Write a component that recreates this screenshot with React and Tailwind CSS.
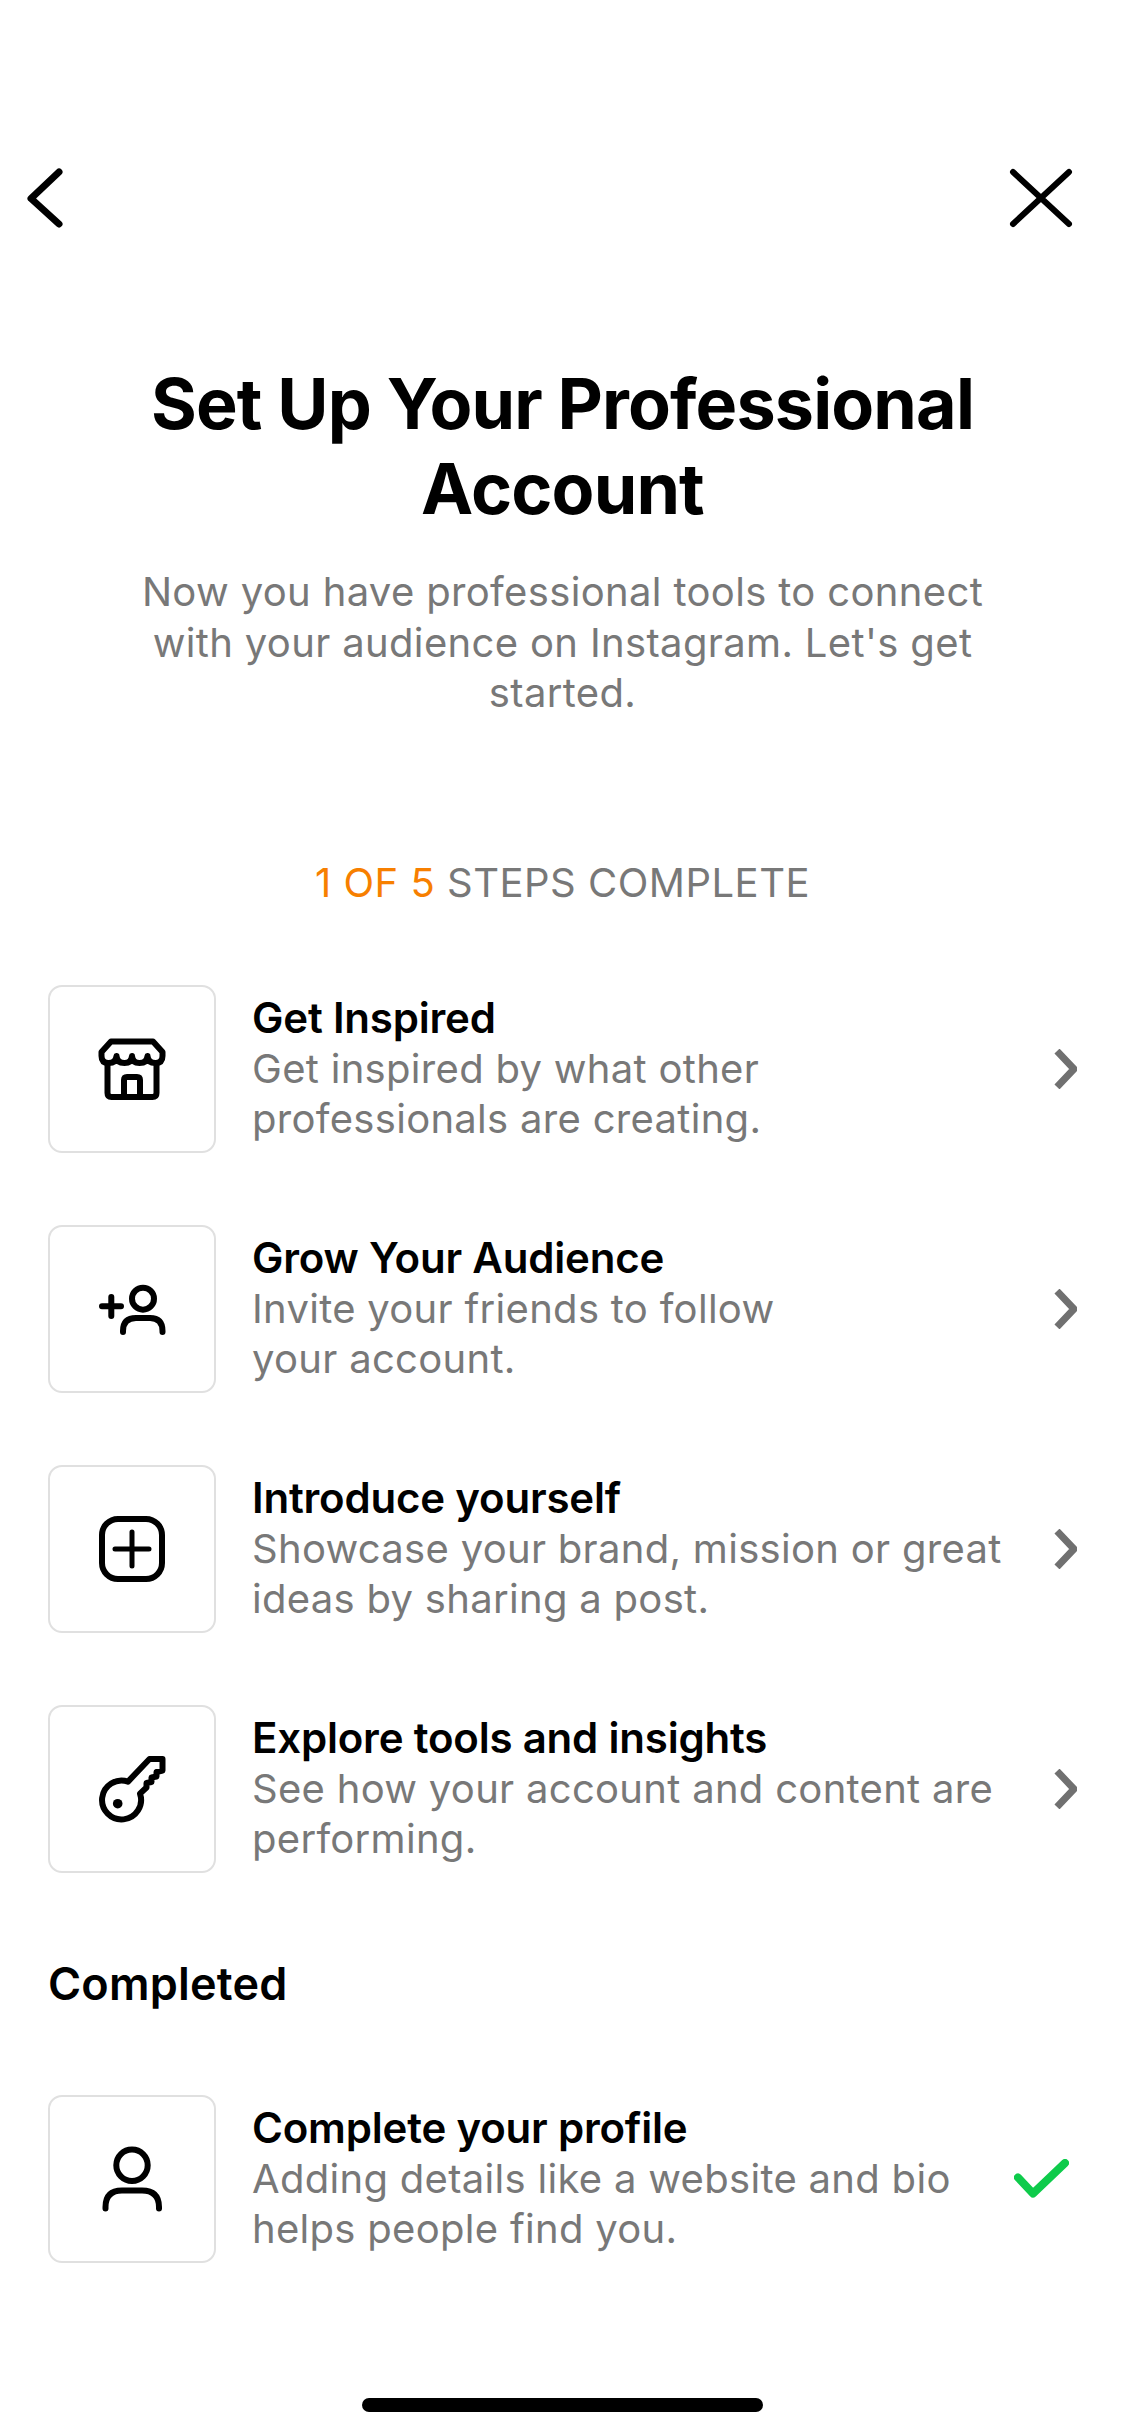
import React from 'react';

const sw = { fill: 'none', stroke: 'currentColor', strokeWidth: 6, strokeLinecap: 'round', strokeLinejoin: 'round' };

const StoreIcon = () => (
  <svg width="72" height="72" viewBox="0 0 72 72" {...sw}>
    <path d="M15 8.5H57L66.5 19V23Q66.5 30 59.5 30Q52 30 51.5 23Q51 30 43.5 30Q36.5 30 36 23Q35.5 30 28.5 30Q21 30 20.5 23Q20 30 12.5 30Q5.5 30 5.5 23V19Z" />
    <path d="M11.5 30V60Q11.5 64 15.5 64H56.5Q60.5 64 60.5 60V30" />
    <path d="M28 64V47Q28 44 31 44H41Q44 44 44 47V64" />
  </svg>
);

const AddPersonIcon = () => (
  <svg width="72" height="72" viewBox="0 0 72 72" {...sw}>
    <circle cx="47" cy="25.7" r="11" />
    <path d="M27 59V58Q27 45 40 45H54Q66.5 45 66.5 58V59" />
    <path d="M6 33.3H25M15.3 24V43" />
  </svg>
);

const PlusBoxIcon = () => (
  <svg width="72" height="72" viewBox="0 0 72 72" {...sw}>
    <rect x="6" y="6" width="60" height="60" rx="16" />
    <path d="M19 36H53M36 19V53" strokeWidth="5" />
  </svg>
);

const KeyIcon = () => (
  <svg width="72" height="72" viewBox="0 0 72 72" {...sw}>
    <path d="M32 28.6L53.5 6H66.5V17.5L60.5 19V23.5L55.5 24.5V29L50.5 30V34.5L44 40.7A19.5 19.5 0 1 1 32 28.6Z" />
    <circle cx="21.7" cy="50.7" r="4.8" fill="currentColor" stroke="none" />
  </svg>
);

const PersonIcon = () => (
  <svg width="72" height="72" viewBox="0 0 72 72" {...sw}>
    <circle cx="36" cy="22.3" r="15.7" />
    <path d="M9.5 65.5V64Q9.5 47.5 26 47.5H46Q63 47.5 63 64V65.5" />
  </svg>
);

const Chevron = () => (
  <svg width="23" height="40" viewBox="0 0 23 40" fill="none" className="text-[#707070]">
    <path d="M3 2L20 20L3 38" stroke="currentColor" strokeWidth="7" />
  </svg>
);

const Check = () => (
  <svg width="55" height="39" viewBox="0 0 55 39" fill="none">
    <path d="M4 18.5L19 34.5L51 4" stroke="#0ecb4b" strokeWidth="8" strokeLinecap="round" strokeLinejoin="round" />
  </svg>
);

const Row = ({ icon, title, lines, trailing }) => (
  <div className="flex items-center pl-12">
    <div className="w-[168px] h-[168px] shrink-0 flex items-center justify-center border-2 border-[#e0e0e0] rounded-[14px]">
      {icon}
    </div>
    <div className="ml-[36px] flex-1 min-w-0">
      <div className="text-[42px] leading-[50px] font-semibold text-black tracking-[-0.2px]">{title}</div>
      <div className="mt-[1px] text-[40px] leading-[50px] text-[#787878] tracking-[0.3px] whitespace-nowrap">
        {lines[0]}
        <br />
        {lines[1]}
      </div>
    </div>
    {trailing}
  </div>
);

const ChevronSlot = () => (
  <div className="w-[71px] pr-12 shrink-0 flex justify-end"><Chevron /></div>
);

const steps = [
  { icon: <StoreIcon />, title: 'Get Inspired', lines: ['Get inspired by what other', 'professionals are creating.'] },
  { icon: <AddPersonIcon />, title: 'Grow Your Audience', lines: ['Invite your friends to follow', 'your account.'] },
  { icon: <PlusBoxIcon />, title: 'Introduce yourself', lines: ['Showcase your brand, mission or great', 'ideas by sharing a post.'] },
  { icon: <KeyIcon />, title: 'Explore tools and insights', lines: ['See how your account and content are', 'performing.'] },
];

export default function App() {
  return (
    <div className="w-[1125px] h-[2436px] bg-white flex flex-col" style={{ fontFamily: 'Inter, "Noto Sans", sans-serif' }}>
      <div className="flex items-center justify-between pt-[168px] pl-[27px] pr-[52px] text-black">
        <svg width="36" height="60" viewBox="0 0 36 60" fill="none">
          <path d="M32 4L4 30.5L32 56" stroke="currentColor" strokeWidth="7" strokeLinecap="round" strokeLinejoin="round" />
        </svg>
        <svg width="64" height="60" viewBox="0 0 64 60" fill="none">
          <path d="M4 4L60 56M60 4L4 56" stroke="currentColor" strokeWidth="6" strokeLinecap="round" />
        </svg>
      </div>

      <h1 className="mt-[133px] text-center text-[70px] leading-[85px] font-bold text-black tracking-[-0.85px]">
        Set Up Your Professional
        <br />
        Account
      </h1>

      <p className="mt-[36px] text-center text-[40px] leading-[50.5px] text-[#787878] tracking-[0.35px]">
        Now you have professional tools to connect
        <br />
        with your audience on Instagram. Let's get
        <br />
        started.
      </p>

      <div className="mt-[139px] text-center text-[40px] leading-[50px] text-[#787878] tracking-[0.5px]">
        <span className="text-[#f77f00]">1 OF 5</span> STEPS COMPLETE
      </div>

      <div className="mt-[77px] flex flex-col gap-[72px]">
        {steps.map((s) => (
          <Row key={s.title} {...s} trailing={<ChevronSlot />} />
        ))}
      </div>

      <div className="mt-[83px] pl-12 text-[45px] leading-[56px] font-semibold text-black tracking-[0.2px]">Completed</div>

      <div className="mt-[83px]">
        <Row
          icon={<PersonIcon />}
          title="Complete your profile"
          lines={['Adding details like a website and bio', 'helps people find you.']}
          trailing={<div className="w-[111px] pr-14 shrink-0 flex justify-end"><Check /></div>}
        />
      </div>

      <div className="mt-auto pb-6 flex justify-center">
        <div className="w-[401px] h-[14px] rounded-full bg-black" />
      </div>
    </div>
  );
}
